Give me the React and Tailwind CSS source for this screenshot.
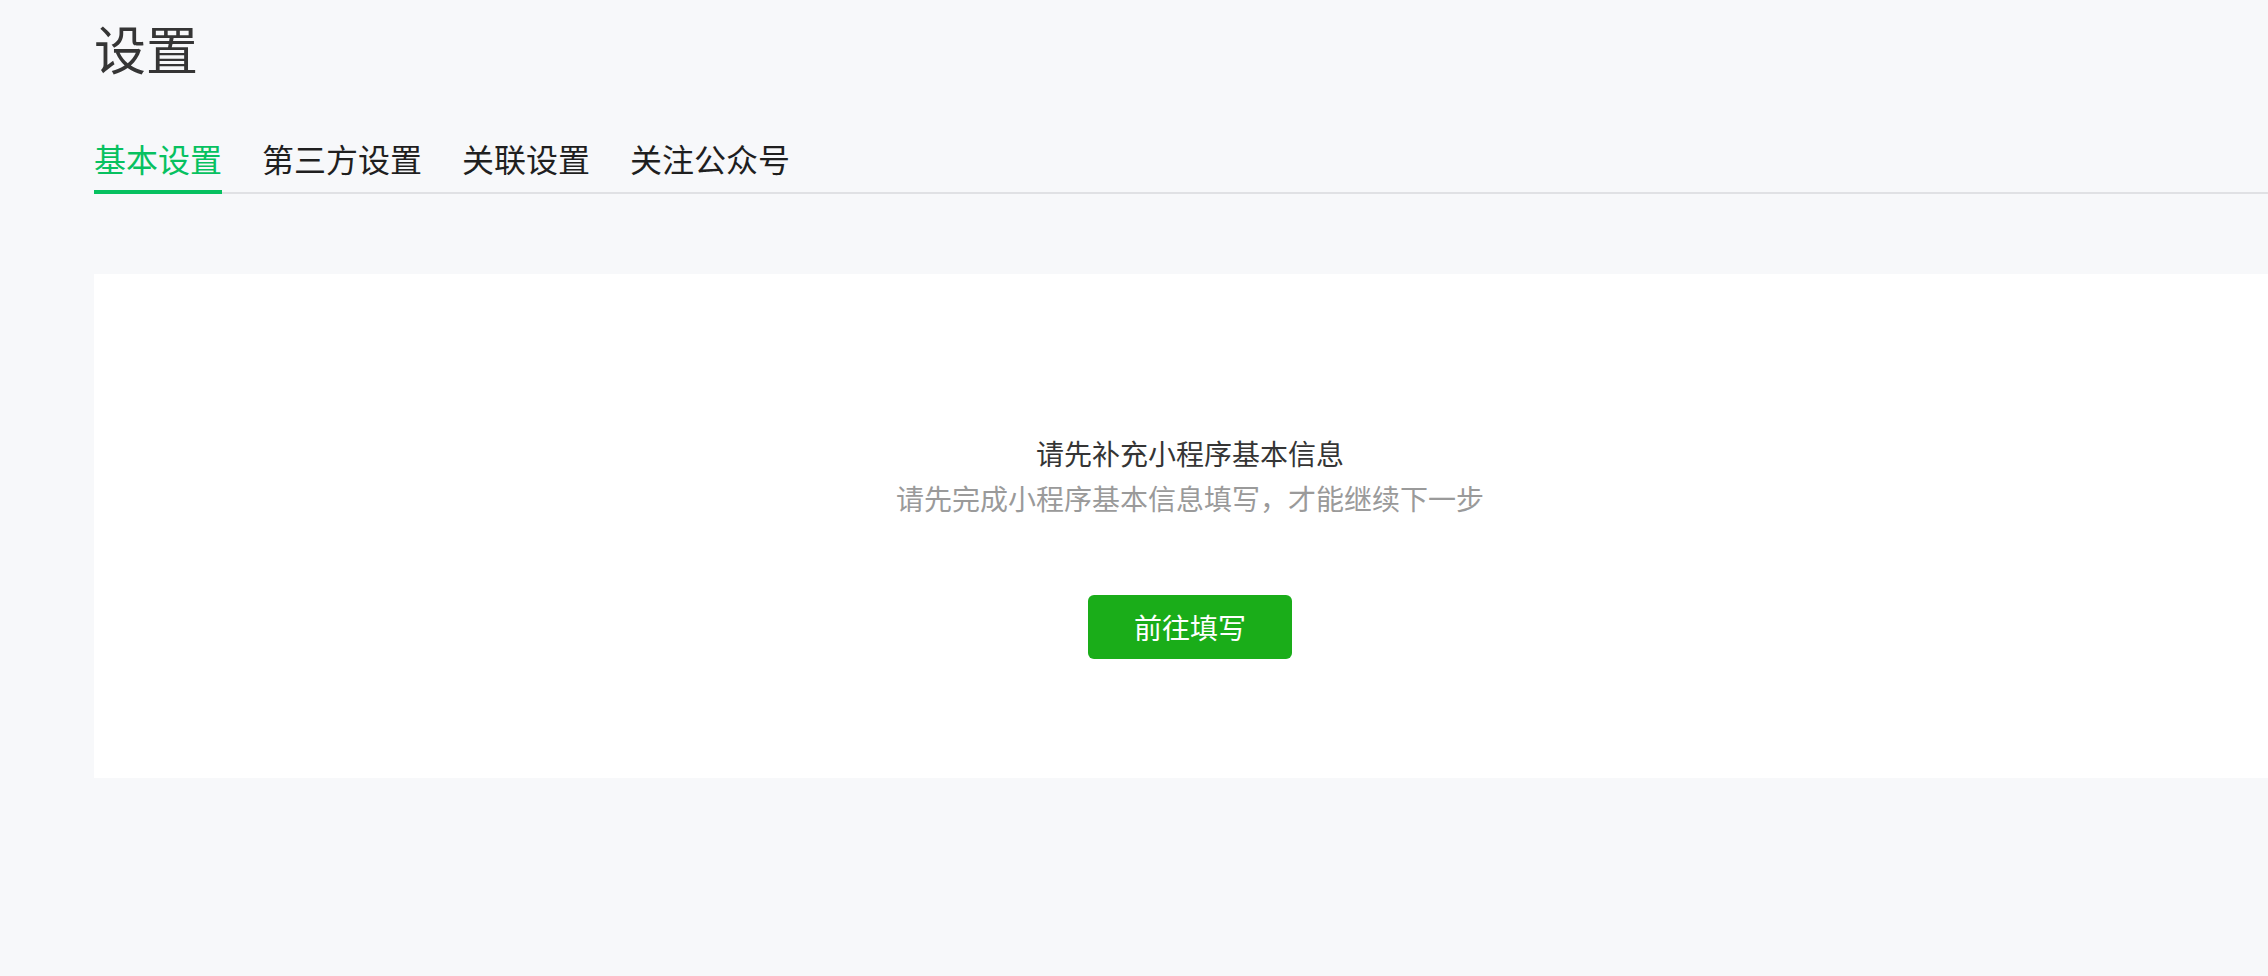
import React, { useState } from 'react';

const tabs = ['基本设置', '第三方设置', '关联设置', '关注公众号'];

export default function App() {
  const [active, setActive] = useState(0);

  return (
    <div className="min-h-[976px] w-full overflow-hidden bg-[#f7f8fa] pl-[94px] font-['Noto_Sans_CJK_SC','Noto_Sans',sans-serif]">
      {/* Page title */}
      <h1 className="pt-[22px] text-[52px] leading-[52px] font-normal text-[#353535]">设置</h1>

      {/* Tabs */}
      <div className="mt-[68px] flex gap-[40px] border-b-2 border-[#e0e1e4]">
        {tabs.map((t, i) => (
          <button
            key={t}
            onClick={() => setActive(i)}
            className={`-mb-[2px] pb-[16px] text-[32px] leading-[32px] border-b-4 ${
              i === active ? 'border-[#07c160] text-[#07c160]' : 'border-transparent text-[#1f1f1f]'
            }`}
          >
            {t}
          </button>
        ))}
      </div>

      {/* Empty-state card */}
      <div className="mt-[80px] flex h-[504px] w-[2192px] shrink-0 flex-col items-center bg-white pt-[157px]">
        <p className="text-[28px] leading-[45px] text-[#353535]">请先补充小程序基本信息</p>
        <p className="text-[28px] leading-[45px] text-[#9a9a9a]">请先完成小程序基本信息填写，才能继续下一步</p>
        <button className="mt-[74px] h-[64px] w-[204px] rounded-[6px] bg-[#1aad19] text-[28px] text-white">
          前往填写
        </button>
      </div>
    </div>
  );
}
